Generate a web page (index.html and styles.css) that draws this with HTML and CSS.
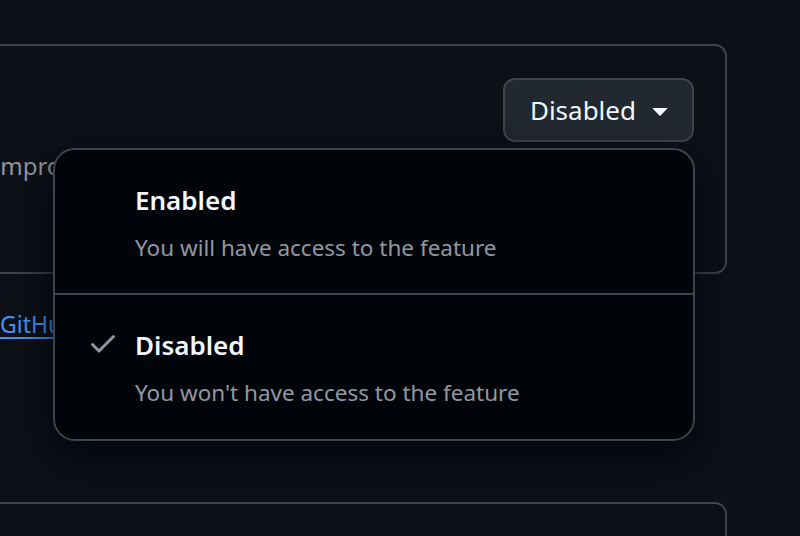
FILE: index.html
```html
<!DOCTYPE html>
<html lang="en">
<head>
<meta charset="utf-8">
<title>Feature preview</title>
<link rel="stylesheet" href="styles.css">
</head>
<body>
<div class="main">
  <section class="card">
    <div class="card-text">
      <p class="card-desc">improve</p>
    </div>
    <button class="select-btn" type="button">
      <span class="select-label">Disabled</span>
      <svg class="caret" viewBox="0 0 16 16" width="32" height="32" aria-hidden="true"><path d="m4.427 7.427 3.396 3.396a.25.25 0 0 0 .354 0l3.396-3.396A.25.25 0 0 0 11.396 7H4.604a.25.25 0 0 0-.177.427Z"/></svg>
    </button>
  </section>
  <p class="feedback"><a href="#">GitHub Community</a></p>
  <section class="card card-next"></section>
</div>

<ul class="menu" role="menu">
  <li class="menu-item" role="menuitemradio" aria-checked="false">
    <span class="lead"></span>
    <span class="item-text">
      <span class="item-title">Enabled</span>
      <span class="item-desc">You will have access to the feature</span>
    </span>
  </li>
  <li class="menu-item" role="menuitemradio" aria-checked="true">
    <span class="lead">
      <svg viewBox="0 0 16 16" width="32" height="32" aria-hidden="true"><path d="M13.78 4.22a.75.75 0 0 1 0 1.06l-7.25 7.25a.75.75 0 0 1-1.06 0L2.22 9.28a.751.751 0 0 1 .018-1.042.751.751 0 0 1 1.042-.018L6 10.94l6.72-6.72a.75.75 0 0 1 1.06 0Z"/></svg>
    </span>
    <span class="item-text">
      <span class="item-title">Disabled</span>
      <span class="item-desc">You won't have access to the feature</span>
    </span>
  </li>
</ul>
</body>
</html>
```

FILE: styles.css
```css
* { box-sizing: border-box; }

html, body {
  margin: 0;
  padding: 0;
  height: 100%;
}

body {
  background: #0d1117;
  color: #f0f6fc;
  font-family: "Noto Sans", "Open Sans", sans-serif;
  overflow: hidden;
  position: relative;
}

.main {
  margin-left: -41px;
  width: 768px;
  padding-top: 44px;
}

.card {
  border: 2px solid #3d444d;
  border-radius: 12px;
  padding: 32px 31px 32px 32px;
  display: flex;
  justify-content: space-between;
  align-items: flex-start;
  height: 230px;
}

.card-text {
  padding-top: 70px;
  margin-left: 1px;
}

.card-desc {
  margin: 0;
  font-size: 24px;
  line-height: 36px;
  color: #9198a1;
}

.select-btn {
  display: flex;
  align-items: center;
  gap: 8px;
  height: 64px;
  padding: 0 16px 0 25px;
  background: #212830;
  border: 2px solid #3d444d;
  border-radius: 12px;
  color: #f0f6fc;
  font-family: inherit;
  font-size: 26px;
  cursor: pointer;
}

.caret {
  fill: #f0f6fc;
  display: block;
}

.feedback {
  margin: 32px 0 0 41px;
  font-size: 23px;
  line-height: 36px;
}

.feedback a {
  color: #4493f8;
  text-decoration: underline;
  text-underline-offset: 4px;
}

.card-next {
  margin-top: 160px;
  height: 120px;
}

.menu {
  position: absolute;
  left: 53px;
  top: 148px;
  width: 642px;
  height: 293px;
  margin: 0;
  padding: 0;
  list-style: none;
  background: #010409;
  border: 2px solid #3d444d;
  border-radius: 22px;
  box-shadow: 0 16px 40px rgba(1, 4, 9, 0.85);
  overflow: hidden;
}

.menu-item {
  display: flex;
  align-items: flex-start;
  gap: 16px;
  padding: 30px 32px 28px 32px;
}

.menu-item + .menu-item {
  border-top: 2px solid #3d444d;
}

.lead {
  width: 32px;
  height: 32px;
  margin-top: 2px;
  flex: none;
}

.lead svg {
  display: block;
  fill: #9198a1;
}

.item-text {
  display: flex;
  flex-direction: column;
  gap: 11px;
}

.item-title {
  font-size: 26px;
  line-height: 40px;
  font-weight: 600;
  color: #f0f6fc;
}

.item-desc {
  font-size: 22.5px;
  line-height: 34px;
  color: #9198a1;
}
```
